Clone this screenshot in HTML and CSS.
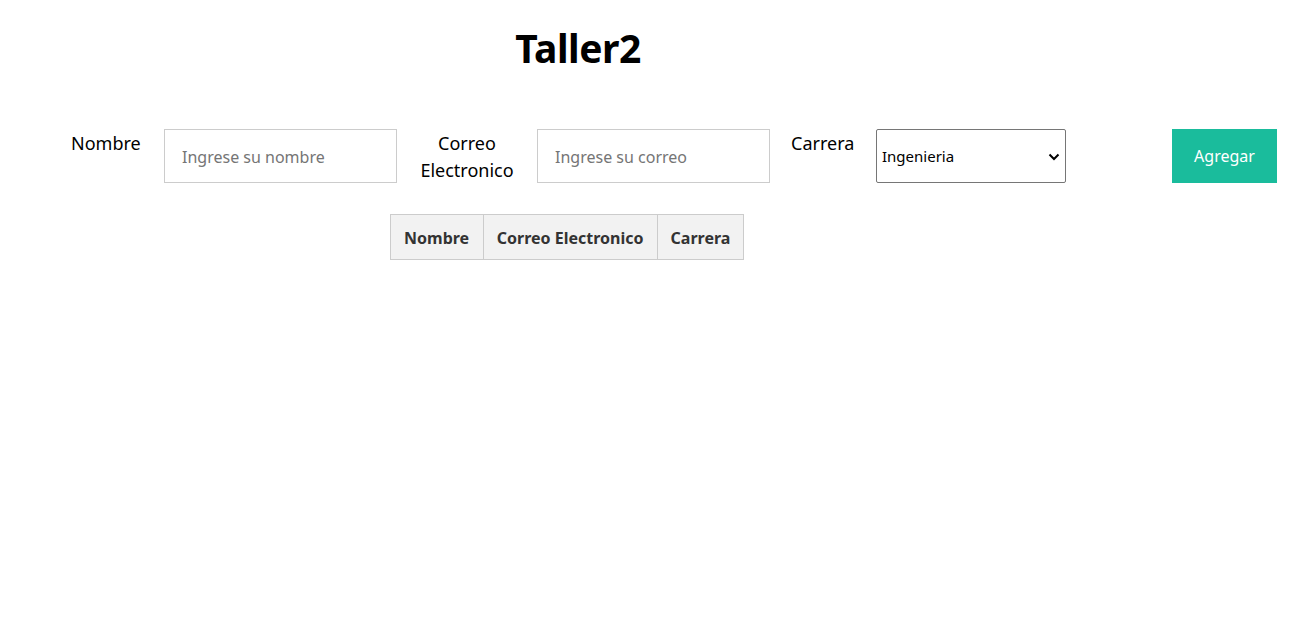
FILE: index.html
```html
<!DOCTYPE html>
<html lang="es">
<head>
<meta charset="utf-8">
<title>Taller2</title>
<link rel="stylesheet" href="styles.css">
</head>
<body>
<header class="head">
  <h1 class="title">Taller2</h1>
</header>
<form class="form">
  <label class="lbl lbl-nombre" for="nombre">Nombre</label>
  <input class="field" id="nombre" type="text" placeholder="Ingrese su nombre">
  <label class="lbl lbl-correo" for="correo">Correo Electronico</label>
  <input class="field" id="correo" type="text" placeholder="Ingrese su correo">
  <label class="lbl lbl-carrera" for="carrera">Carrera</label>
  <div class="select-wrap">
    <select class="sel" id="carrera">
      <option>Ingenieria</option>
    </select>
    <svg class="chev" width="12" height="8" viewBox="0 0 12 8"><path d="M1.5 1.5 L6 6 L10.5 1.5" fill="none" stroke="#000" stroke-width="2"/></svg>
  </div>
  <button class="btn" type="button">Agregar</button>
</form>
<div class="table-wrap">
  <table class="tbl">
    <thead>
      <tr>
        <th class="c1">Nombre</th>
        <th class="c2">Correo Electronico</th>
        <th class="c3">Carrera</th>
      </tr>
    </thead>
  </table>
</div>
</body>
</html>
```
FILE: styles.css
```css
html, body {
  margin: 0;
  padding: 0;
  background: #fff;
}
body {
  font-family: "Noto Sans", "Open Sans", sans-serif;
  color: #000;
}
.head {
  display: flex;
  justify-content: center;
  padding-right: 151px;
  padding-top: 22px;
}
.title {
  margin: 0;
  font-size: 39px;
  font-weight: 700;
  line-height: 52px;
  letter-spacing: -0.5px;
}
.form {
  display: flex;
  align-items: flex-start;
  padding-left: 71px;
  margin-top: 55px;
}
.lbl {
  font-size: 18px;
  line-height: 27px;
  padding-top: 1px;
  color: #000;
}
.lbl-nombre { width: 72px; margin-right: 21px; }
.lbl-correo {
  width: 98px;
  text-align: center;
  margin: 0 21px 0 21px;
}
.lbl-carrera { width: 64px; margin: 0 21px 0 21px; }
.field {
  box-sizing: border-box;
  width: 233px;
  height: 54px;
  border: 1px solid #cccccc;
  padding: 1px 17px 0;
  font-family: inherit;
  font-size: 16px;
  color: #333;
  outline: none;
  margin: 0;
}
.field::placeholder {
  color: #757575;
}
.select-wrap {
  position: relative;
  width: 190px;
  height: 54px;
}
.sel {
  box-sizing: border-box;
  width: 190px;
  height: 54px;
  border: 1px solid #767676;
  border-radius: 2px;
  background: #fff;
  font-family: inherit;
  font-size: 15px;
  color: #000;
  padding: 0 5px;
  margin: 0;
  appearance: none;
  -webkit-appearance: none;
}
.chev {
  position: absolute;
  right: 6px;
  top: 24px;
  pointer-events: none;
}
.btn {
  margin-left: 106px;
  width: 105px;
  height: 54px;
  border: none;
  background: #1abc9c;
  color: #fff;
  font-family: inherit;
  font-size: 16px;
  padding: 0;
}
.table-wrap {
  display: flex;
  justify-content: center;
  padding-right: 173px;
  margin-top: 30px;
}
.tbl {
  border-collapse: collapse;
  border: 1px solid #cccccc;
}
.tbl th {
  background: #f2f2f2;
  border: 1px solid #cccccc;
  height: 45px;
  padding: 2px 13px 0;
  font-size: 16px;
  font-weight: 700;
  color: #333;
  box-sizing: border-box;
}
.c1 { width: 93px; }
.c2 { width: 174px; }
.c3 { width: 86px; }
```
